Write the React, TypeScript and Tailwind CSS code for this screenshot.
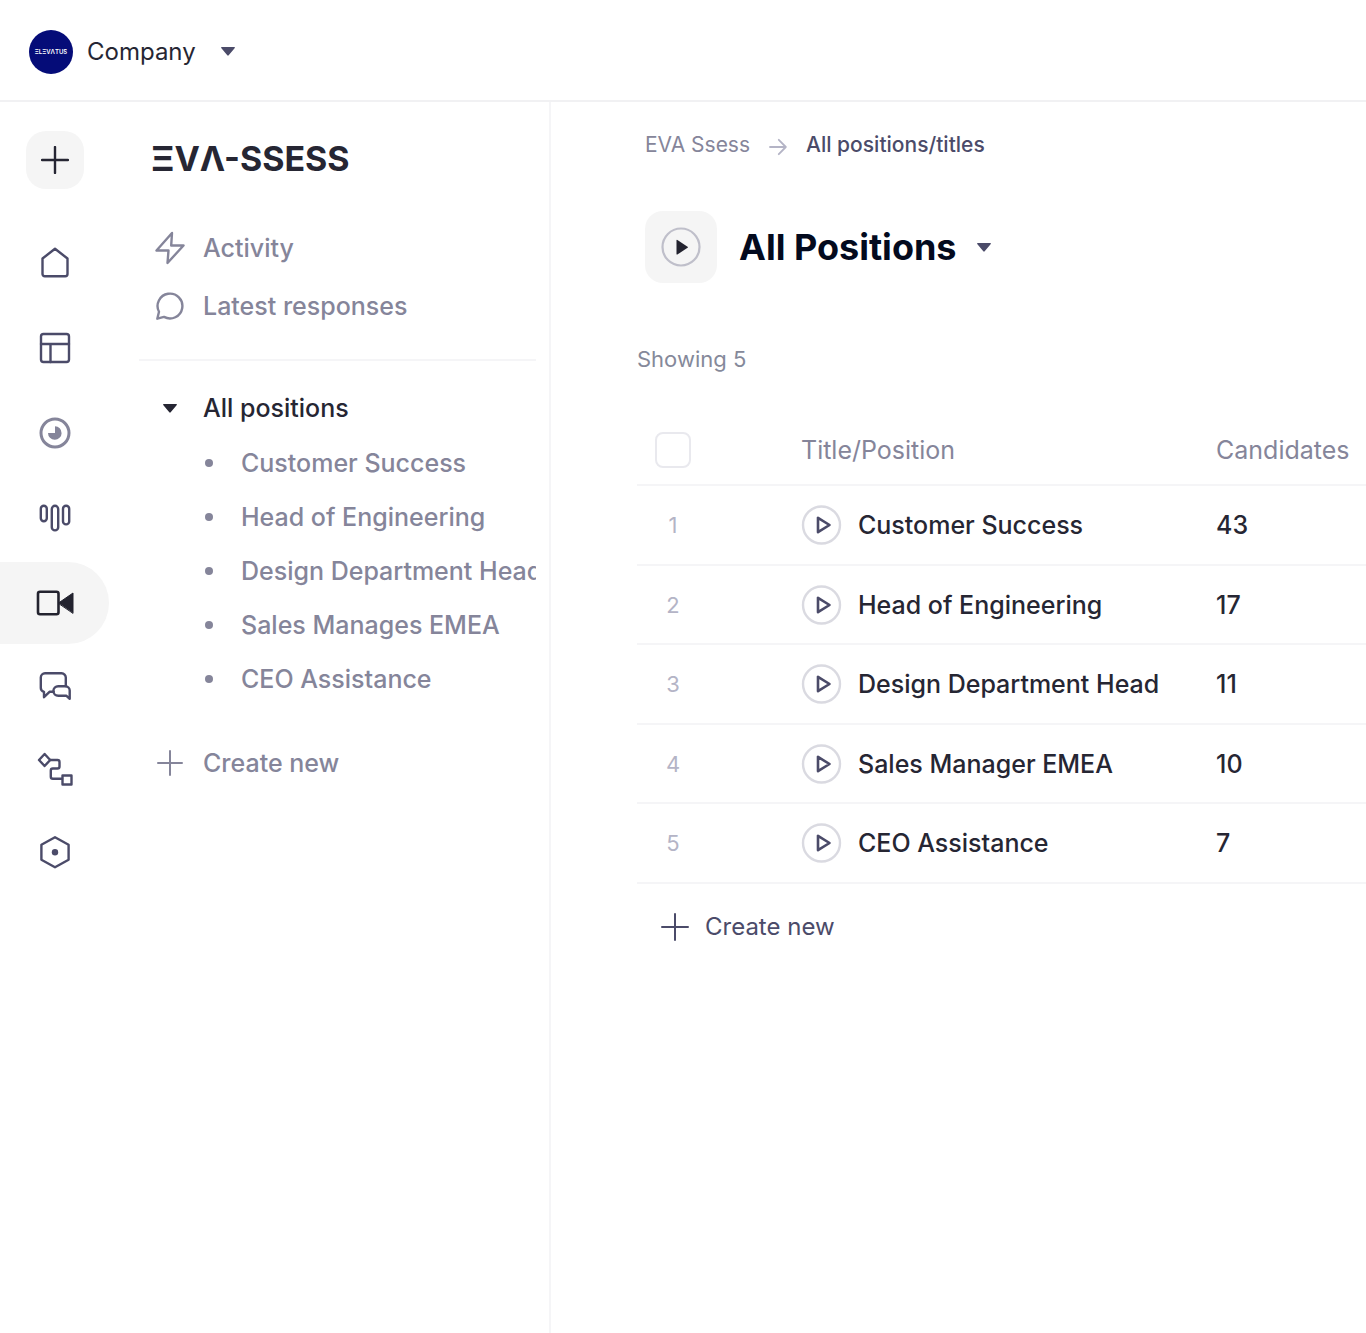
import type { ReactNode } from 'react';

type NavItem = { label: string; icon: ReactNode; active?: boolean };

const navTop: NavItem[] = [
  {
    label: 'Home',
    icon: <path d="M7.500 15.500 20 5.800l12.500 9.700V31a2.200 2.200 0 0 1-2.200 2.200H9.700A2.200 2.200 0 0 1 7.500 31Z" />,
  },
  {
    label: 'Templates',
    icon: (
      <>
        <rect x="6" y="6" width="28" height="28" rx="2.5" />
        <path d="M6 16h28M15.5 16v18" />
      </>
    ),
  },
  {
    label: 'Insights',
    icon: (
      <g className="text-[#85859a]">
        <circle cx="20" cy="20" r="14" stroke="currentColor" strokeWidth="3" />
        <path d="M20 13.2A6.8 6.8 0 1 1 13 20h7Z" fill="currentColor" stroke="none" />
      </g>
    ),
  },
  {
    label: 'Pipelines',
    icon: (
      <>
        <rect x="5.8" y="7.8" width="6" height="15.5" rx="3" />
        <rect x="16.8" y="7.8" width="6.4" height="24.6" rx="3.2" />
        <rect x="28" y="7.8" width="6.2" height="18.6" rx="3" />
      </>
    ),
  },
  {
    label: 'Video assessments',
    active: true,
    icon: (
      <g className="text-[#23232f]">
        <rect x="3" y="8.8" width="20.5" height="22.4" rx="2" stroke="currentColor" strokeWidth="2.6" />
        <path d="M23.5 20 38 10v20Z" fill="currentColor" stroke="currentColor" strokeWidth="1" />
      </g>
    ),
  },
];

const navBottom: NavItem[] = [
  {
    label: 'Conversations',
    icon: (
      <>
        <path d="M30.8 20V11.500A4.200 4.200 0 0 0 26.600 7.300H10A4.200 4.200 0 0 0 5.800 11.500V22c0 1.900 1.200 3.200 3.200 3.800v5.400l5.500-5.400h4.200" />
        <path d="M23.200 20.200h7.100a4.400 4.400 0 0 1 4.400 4.400v8.200l-3.200-3h-8.300a4.800 4.800 0 0 1 0-9.600Z" />
      </>
    ),
  },
  {
    label: 'Workflows',
    icon: (
      <>
        <path d="m9.600 5 5.600 6-5.600 6L4 11Z" />
        <path d="M15.2 11H22.500a2 2 0 0 1 2 2v4.500a2 2 0 0 1-2 2h-4.700a2 2 0 0 0-2 2v6.300a2 2 0 0 0 2 2H27" />
        <rect x="27.5" y="26.5" width="9" height="9" />
      </>
    ),
  },
  {
    label: 'Settings',
    icon: (
      <>
        <path d="m20 5.200 13.600 7.500v15.100L20 35.300 6.400 27.800V12.700Z" />
        <circle cx="20" cy="20.3" r="3.2" fill="currentColor" stroke="none" />
      </>
    ),
  },
];

const sidePositions = [
  'Customer Success',
  'Head of Engineering',
  'Design Department Head',
  'Sales Manages EMEA',
  'CEO Assistance',
];

const rows = [
  { title: 'Customer Success', candidates: 43 },
  { title: 'Head of Engineering', candidates: 17 },
  { title: 'Design Department Head', candidates: 11 },
  { title: 'Sales Manager EMEA', candidates: 10 },
  { title: 'CEO Assistance', candidates: 7 },
];

function Caret() {
  return (
    <svg width="14" height="9" viewBox="0 0 14 9" fill="currentColor" aria-hidden="true">
      <path d="M.6 0h12.800a.6.6 0 0 1 .4 1L7.700 8.300a1 1 0 0 1-1.400 0L.2 1a.6.6 0 0 1 .4-1Z" />
    </svg>
  );
}

function Plus({ size, weight }: { size: number; weight: number }) {
  return (
    <svg
      width={size}
      height={size}
      viewBox={`0 0 ${size} ${size}`}
      fill="none"
      stroke="currentColor"
      strokeWidth={weight}
      strokeLinecap="round"
      aria-hidden="true"
    >
      <path d={`M${size / 2} 1v${size - 2}M1 ${size / 2}h${size - 2}`} />
    </svg>
  );
}

function RailItem({ label, icon, active }: NavItem) {
  return (
    <a
      href="#"
      aria-label={label}
      className={
        active
          ? 'flex h-[82px] items-center justify-center rounded-r-full bg-[#f5f5f5]'
          : 'flex h-[82px] items-center justify-center'
      }
    >
      <svg
        width="40"
        height="40"
        viewBox="0 0 40 40"
        fill="none"
        stroke="currentColor"
        strokeWidth="2.4"
        strokeLinejoin="round"
        strokeLinecap="round"
        aria-hidden="true"
      >
        {icon}
      </svg>
    </a>
  );
}

export default function App() {
  return (
    <div className="flex min-h-screen flex-col bg-white font-['Inter',sans-serif] text-[#262633]">
      <header className="flex h-[102px] items-center border-b-2 border-[#f1f1f3] pt-[3px] pl-[29px]">
        <button type="button" className="flex items-center">
          <span className="flex size-11 items-center justify-center rounded-full bg-[#050c78] text-[6px] font-semibold text-white">
            ΞLΞVΛTUS
          </span>
          <span className="ml-[14px] text-[24px] leading-8">Company</span>
          <span className="ml-[25px] text-[#4b4b69]">
            <Caret />
          </span>
        </button>
      </header>

      <div className="flex flex-1">
        <nav aria-label="Main" className="w-[109px] shrink-0 pt-[29px]">
          <button
            type="button"
            aria-label="Add"
            className="ml-[26px] flex size-[58px] items-center justify-center rounded-[20px] bg-[#f5f5f5]"
          >
            <Plus size={28} weight={2.4} />
          </button>
          <div className="mt-[33px] flex flex-col gap-[3px] text-[#4b4b69]">
            {navTop.map((item) => (
              <RailItem key={item.label} {...item} />
            ))}
          </div>
          <div className="mt-px flex flex-col gap-px text-[#4b4b69]">
            {navBottom.map((item) => (
              <RailItem key={item.label} {...item} />
            ))}
          </div>
        </nav>

        <aside className="w-[442px] shrink-0 border-r-2 border-[#f5f5f7] pt-[39px] pr-[13px] pl-[30px] text-[25px] leading-8 font-medium text-[#85859a]">
          <div aria-label="EVA-SSESS" className="pl-3 text-[34px] leading-9 font-bold text-[#262633]">
            ΞVΛ-SSESS
          </div>

          <a href="#" className="mt-[42px] flex h-[58px] items-center gap-[18px] pl-4">
            <svg width="30" height="34" viewBox="0 0 30 34" fill="none" stroke="currentColor" strokeWidth="2.4" strokeLinejoin="round" aria-hidden="true">
              <path d="M17 2 1.500 19.500h12L12.500 32 28.500 14.500H16.200Z" />
            </svg>
            Activity
          </a>
          <a href="#" className="flex h-[58px] items-center gap-[18px] pl-4">
            <svg width="30" height="30" viewBox="0 0 30 30" fill="none" stroke="currentColor" strokeWidth="2.4" strokeLinejoin="round" aria-hidden="true">
              <path d="M2.300 27.700 4 20.800A12.400 12.400 0 1 1 9 25.900Z" />
            </svg>
            Latest responses
          </a>

          <hr className="mt-6 border-t-2 border-[#f5f5f7]" />

          <button type="button" className="mt-5 flex h-[54px] w-full items-center gap-[26px] pl-6 text-[#262633]">
            <Caret />
            All positions
          </button>
          <ul className="mt-px overflow-hidden whitespace-nowrap">
            {sidePositions.map((name) => (
              <li key={name}>
                <a href="#" className="flex h-[54px] items-center gap-[28px] pl-[66px]">
                  <span className="size-2 shrink-0 rounded-full bg-current" />
                  {name}
                </a>
              </li>
            ))}
          </ul>
          <button type="button" className="mt-7 flex h-[58px] items-center gap-5 pl-[18px]">
            <Plus size={26} weight={2} />
            Create new
          </button>
        </aside>

        <main className="min-w-0 flex-1 pt-[29px] pl-[86px]">
          <nav aria-label="Breadcrumb" className="flex items-center pl-2 text-[21px] leading-7">
            <a href="#" className="text-[#85859a]">
              EVA Ssess
            </a>
            <svg
              width="18"
              height="18"
              viewBox="0 0 18 18"
              fill="none"
              stroke="currentColor"
              strokeWidth="1.8"
              strokeLinecap="round"
              strokeLinejoin="round"
              className="mx-[19px] mt-1 text-[#b4b4c6]"
              aria-hidden="true"
            >
              <path d="M1 9h15.500M9.800 1.800 16.800 9l-7 7.200" />
            </svg>
            <a href="#" aria-current="page" className="font-medium text-[#4b4b69]">
              All positions/titles
            </a>
          </nav>

          <div className="mt-[52px] flex items-center pl-2">
            <span className="flex size-[72px] items-center justify-center rounded-[18px] bg-[#f5f5f5]">
              <svg width="40" height="40" viewBox="0 0 40 40" aria-hidden="true">
                <circle cx="20" cy="20" r="18.5" fill="none" stroke="#bfbfca" strokeWidth="2.2" />
                <path d="M15.500 13.500v13.400a.6.6 0 0 0 .9.500l10.200-6.700a.6.6 0 0 0 0-1L16.400 13a.6.6 0 0 0-.9.500Z" fill="#23232f" />
              </svg>
            </span>
            <h1 className="ml-[22px] text-[36px] leading-[44px] font-bold text-[#030a1e]">
              <button type="button" className="flex items-center gap-5">
                All Positions
                <span className="text-[#4b4b69]">
                  <Caret />
                </span>
              </button>
            </h1>
          </div>

          <p className="mt-[62px] text-[22px] leading-7 text-[#85899a]">Showing 5</p>

          <table className="mt-[43px] w-full table-fixed border-separate border-spacing-0 text-left text-[25px] leading-8">
            <colgroup>
              <col className="w-[164px]" />
              <col className="w-[415px]" />
              <col />
            </colgroup>
            <thead>
              <tr className="h-[70px] text-[#85859a] *:border-b-2 *:border-[#f5f5f7] *:font-normal">
                <th scope="col">
                  <input
                    type="checkbox"
                    aria-label="Select all positions"
                    className="ml-[18px] block size-9 appearance-none rounded-lg border-2 border-[#e9e9ee] bg-white"
                  />
                </th>
                <th scope="col">Title/Position</th>
                <th scope="col">Candidates</th>
              </tr>
            </thead>
            <tbody>
              {rows.map((row, i) => (
                <tr key={row.title} className="h-20 font-medium even:h-[79px] *:border-b-2 *:border-[#f5f5f7]">
                  <td className="text-[22px] font-normal text-[#b4b4c6]">
                    <span className="block w-[72px] text-center">{i + 1}</span>
                  </td>
                  <td>
                    <a href="#" className="flex items-center gap-4 whitespace-nowrap">
                      <svg width="41" height="40" viewBox="0 0 41 40" fill="none" aria-hidden="true">
                        <circle cx="20.5" cy="20" r="18.5" stroke="#dadae1" strokeWidth="2.4" />
                        <path d="M17 12.800v14.400L28.500 20Z" stroke="#4b4b69" strokeWidth="2.6" strokeLinejoin="round" />
                      </svg>
                      {row.title}
                    </a>
                  </td>
                  <td>{row.candidates}</td>
                </tr>
              ))}
            </tbody>
          </table>

          <button type="button" className="mt-[23px] flex h-10 items-center gap-4 pl-6 text-[24px] leading-8 text-[#4b4b69]">
            <Plus size={28} weight={2} />
            Create new
          </button>
        </main>
      </div>
    </div>
  );
}
